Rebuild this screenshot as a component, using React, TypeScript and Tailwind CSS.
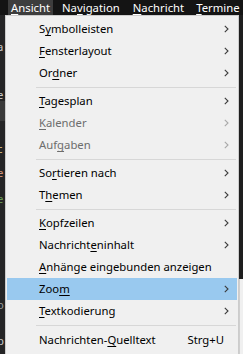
import type { ReactNode } from "react";

type Item =
  | { sep: number }
  | {
      sep?: undefined;
      pre: string;
      key: string;
      post: string;
      sub?: boolean;
      disabled?: boolean;
      active?: boolean;
      shortcut?: string;
    };

const items: Item[] = [
  { pre: "S", key: "y", post: "mbolleisten", sub: true },
  { pre: "", key: "F", post: "ensterlayout", sub: true },
  { pre: "Or", key: "d", post: "ner", sub: true },
  { sep: 6 },
  { pre: "", key: "T", post: "agesplan", sub: true },
  { pre: "", key: "K", post: "alender", sub: true, disabled: true },
  { pre: "Auf", key: "g", post: "aben", sub: true, disabled: true },
  { sep: 6 },
  { pre: "So", key: "r", post: "tieren nach", sub: true },
  { pre: "T", key: "h", post: "emen", sub: true },
  { sep: 6 },
  { pre: "", key: "K", post: "opfzeilen", sub: true },
  { pre: "Nachricht", key: "e", post: "ninhalt", sub: true },
  { pre: "", key: "A", post: "nhänge eingebunden anzeigen" },
  { pre: "Zoo", key: "m", post: "", sub: true, active: true },
  { pre: "", key: "T", post: "extkodierung", sub: true },
  { sep: 7 },
  { pre: "Nachrichten-", key: "Q", post: "uelltext", shortcut: "Strg+U" },
];

// bits of the window behind the menu, peeking out on the left
const behind = [
  { y: 26, ch: "a", c: "text-[#c8c8c8]" },
  { y: 74, ch: "e", c: "text-[#c8c8c8]" },
  { y: 128, ch: "c", c: "text-[#d7ba7d]" },
  { y: 152, ch: "e", c: "text-[#ce9178]" },
  { y: 178, ch: "e", c: "text-[#6a9955]" },
  { y: 284, ch: "o", c: "text-[#9a9a9a]" },
  { y: 320, ch: "b", c: "text-[#c8c8c8]" },
];

function Chevron({ dim }: { dim?: boolean }) {
  return (
    <svg width="5" height="8" viewBox="0 0 5 8" className="shrink-0">
      <path d="M0.8 0.8 L4 4 L0.8 7.2" fill="none" stroke={dim ? "#a8a8a8" : "#3c3c3c"} strokeWidth="1.1" />
    </svg>
  );
}

function Mn({ pre, k, post }: { pre: string; k: string; post: string }): ReactNode {
  return (
    <span className="whitespace-nowrap">
      {pre}
      <span className="underline underline-offset-[2px] decoration-1">{k}</span>
      {post}
    </span>
  );
}

export default function App() {
  return (
    <div
      className="w-[243px] h-[354px] overflow-hidden bg-[#1e1e1e] relative text-[11.3px] leading-none"
      style={{ fontFamily: '"Noto Sans", "Open Sans", sans-serif' }}
    >
      {/* menu bar */}
      <div className="h-[15px] flex items-center bg-[#141414] text-white">
        <div className="ml-[8px] h-full px-[3px] flex items-center bg-[#3d3d3d]">
          <Mn pre="" k="A" post="nsicht" />
        </div>
        <div className="ml-[9px]">
          <Mn pre="Na" k="v" post="igation" />
        </div>
        <div className="ml-[13px]">
          <Mn pre="" k="N" post="achricht" />
        </div>
        <div className="ml-[12px]">
          <Mn pre="" k="T" post="ermine" />
        </div>
        <div className="ml-[6px] w-[3px] h-[5px] bg-[#3a8ee6]" />
      </div>

      {/* background window content */}
      <div className="absolute left-0 top-[15px] w-[5px] h-[339px] bg-[#252526]">
        <div className="absolute left-0 top-[86px] w-[5px] h-[20px] bg-[#3a3a3a]" />
        {behind.map((b, i) => (
          <span key={i} className={`absolute left-[-3px] ${b.c}`} style={{ top: b.y }}>
            {b.ch}
          </span>
        ))}
      </div>

      {/* Zoom submenu peeking on the right */}
      <div className="absolute left-[239px] top-[279px] w-[10px] h-[80px] bg-[#f0f0f0] border-l border-[#cfcfcf]" />

      {/* dropdown */}
      <div className="absolute left-[5px] top-[15px] w-[234px] h-[345px] bg-[#f0f0f0] border border-[#cccccc] pt-[2px] pl-[1px] pr-[1px] text-black">
        {items.map((it, i) =>
          it.sep !== undefined ? (
            <div key={i} className="flex items-center pl-[29px] pr-[1px]" style={{ height: it.sep }}>
              <div className="h-px w-full bg-[#d7d7d7]" />
            </div>
          ) : (
            <div
              key={i}
              className={`h-[22px] flex items-center pl-[32px] pr-[8px] ${it.active ? "bg-[#99c9ef]" : ""} ${
                it.disabled ? "text-[#6d6d6d]" : ""
              }`}
            >
              <div className="flex-1">
                <Mn pre={it.pre} k={it.key} post={it.post} />
              </div>
              {it.shortcut && <span className="mr-[5px]">{it.shortcut}</span>}
              {it.sub && <Chevron dim={it.disabled} />}
            </div>
          )
        )}
      </div>
    </div>
  );
}
